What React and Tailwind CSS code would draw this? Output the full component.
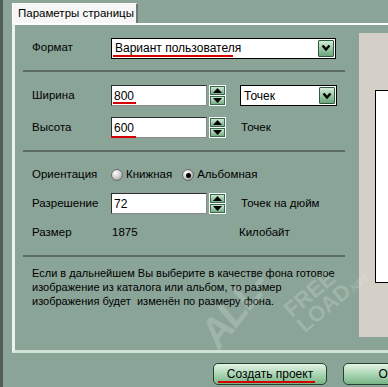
import React from "react";

// Окно "Параметры страницы" — зелёная тема

function Spin() {
  return (
    <div className="ml-[2px] flex h-[21px] w-[17px] flex-col gap-[1px] border border-white bg-white">
      <div className="flex h-[9px] items-center justify-center border border-[#3d6a4b] bg-gradient-to-b from-[#cbe7d1] to-[#78ae88]">
        <svg width="9" height="5" viewBox="0 0 9 5"><polygon points="4.5,0 9,5 0,5" fill="#000" /></svg>
      </div>
      <div className="flex h-[9px] items-center justify-center border border-[#3d6a4b] bg-gradient-to-b from-[#cbe7d1] to-[#78ae88]">
        <svg width="9" height="5" viewBox="0 0 9 5"><polygon points="0,0 9,0 4.5,5" fill="#000" /></svg>
      </div>
    </div>
  );
}

function DropBtn() {
  return (
    <div className="flex h-[17px] w-[16px] items-center justify-center rounded-[1px] border border-[#2e5a3b] bg-gradient-to-b from-[#d3ecd8] via-[#9ccaa7] to-[#6aa47b]">
      <svg width="10" height="8" viewBox="0 0 10 8">
        <path d="M1.5 1.5 L5 5.5 L8.5 1.5" fill="none" stroke="#000" strokeWidth="2.4" />
      </svg>
    </div>
  );
}

function Select({ text, width, underline }) {
  return (
    <div className={`relative flex h-[21px] items-center justify-between border border-black bg-white pl-[3px] pr-[1px] text-[12px] ${width}`}>
      <span>{text}</span>
      <DropBtn />
      {underline && <div className="absolute bottom-[1px] left-[1px] h-[2px] w-[120px] bg-[#d40000]" />}
    </div>
  );
}

function Input({ value, line }) {
  return (
    <div className="relative flex h-[21px] w-[96px] items-center border border-[#8a8a8a] border-l-[#2f2f2f] border-t-[#2f2f2f] bg-white pl-[2px] text-[12px]">
      {value}
      {line}
    </div>
  );
}

function Radio({ checked }) {
  return (
    <div className="flex h-[12px] w-[12px] items-center justify-center rounded-full border border-[#6b6b6b] bg-[radial-gradient(circle_at_35%_30%,#ffffff,#c9c9c9_55%,#7d7d7d)]">
      {checked && <div className="h-[5px] w-[5px] rounded-full bg-black" />}
    </div>
  );
}

function Sep() {
  return <div className="ml-[8px] h-[2px] w-[322px] bg-[#5c6c64]" />;
}

function Label({ children }) {
  return <div className="w-[79px] shrink-0">{children}</div>;
}

function GreenButton({ children, underline, width }) {
  return (
    <button className={`relative flex h-[22px] shrink-0 items-center justify-center rounded-[5px] border border-[#24432e] bg-gradient-to-b from-[#e3f4e6] via-[#acd6b5] to-[#78b487] ${width}`}>
      {children}
      {underline && <div className="absolute bottom-[1px] left-[4px] h-[2px] w-[97px] bg-[#d40000]" />}
    </button>
  );
}

export default function App() {
  return (
    <div className="relative h-[387px] w-[388px] overflow-hidden border-l-[3px] border-l-[#4f5e57] bg-[#8aa497] font-['Liberation_Sans',Arial,sans-serif] text-[11.5px] text-black">
      {/* вкладка */}
      <div className="ml-[9px] mt-[3px] flex h-[20px] w-[126px] items-center whitespace-nowrap border-l border-r-2 border-t border-l-white border-r-[#6a7a72] border-t-white bg-[#f6f6f6] pl-[5px] text-[11.5px]">
        Параметры страницы
      </div>

      {/* рамка */}
      <div className="ml-[9px] flex h-[330px] border-b-[3px] border-l-[3px] border-t-2 border-b-[#cfe2d4] border-l-[#eaf3ec] border-t-white">
        <div className="flex w-[344px] shrink-0 flex-col">
          <div className="ml-[17px] mt-[13px] flex h-[20px] items-center">
            <Label>Формат</Label>
            <Select text="Вариант пользователя" width="w-[225px]" underline />
          </div>
          <div className="mt-[12px]"><Sep /></div>

          <div className="ml-[17px] mt-[13px] flex h-[21px] items-center">
            <Label>Ширина</Label>
            <Input value="800" line={<div className="absolute bottom-[1px] left-[1px] h-[2px] w-[23px] bg-[#d40000]" />} />
            <Spin />
            <div className="ml-[14px]">
              <Select text="Точек" width="w-[97px]" />
            </div>
          </div>

          <div className="ml-[17px] mt-[11px] flex h-[21px] items-center">
            <Label>Высота</Label>
            <Input value="600" line={<div className="absolute -bottom-[1px] -left-[1px] h-[2px] w-[25px] bg-[#d40000]" />} />
            <Spin />
            <div className="ml-[15px]">Точек</div>
          </div>
          <div className="mt-[12px]"><Sep /></div>

          <div className="ml-[17px] mt-[16px] flex h-[14px] items-center">
            <Label>Ориентация</Label>
            <Radio />
            <span className="ml-[3px]">Книжная</span>
            <div className="ml-[10px]"><Radio checked /></div>
            <span className="ml-[3px]">Альбомная</span>
          </div>

          <div className="ml-[17px] mt-[11px] flex h-[21px] items-center">
            <Label>Разрешение</Label>
            <Input value="72" />
            <Spin />
            <div className="ml-[15px]">Точек на дюйм</div>
          </div>

          <div className="ml-[17px] mt-[12px] flex h-[14px] items-center">
            <Label>Размер</Label>
            <div className="w-[128px] pl-[1px]">1875</div>
            <div>Килобайт</div>
          </div>
          <div className="mt-[15px]"><Sep /></div>

          <div className="ml-[17px] mt-[9px] whitespace-nowrap text-[11px] leading-[14px]">
            <div>Если в дальнейшем Вы выберите в качестве фона готовое</div>
            <div>изображение из каталога или альбом, то размер</div>
            <div>изображения будет&nbsp; изменён по размеру фона.</div>
          </div>
        </div>

        {/* превью справа */}
        <div className="mt-[8px] flex h-[304px] flex-1 bg-[#d4d0c8]">
          <div className="ml-[16px] mt-[57px] h-[193px] flex-1 border border-r-0 border-black bg-white" />
        </div>
      </div>

      {/* кнопки */}
      <div className="ml-[210px] mt-[10px] flex gap-[16px] text-[12px]">
        <GreenButton width="w-[114px]" underline>Создать проект</GreenButton>
        <GreenButton width="w-[114px]">Отмена</GreenButton>
      </div>

      {/* водяной знак */}
      <div className="pointer-events-none absolute left-[205px] top-[322px] origin-left -rotate-[52deg] text-[40px] font-black italic leading-none tracking-tighter text-white/20">
        ALL-
      </div>
      <div className="pointer-events-none absolute left-[292px] top-[300px] origin-left -rotate-[40deg] text-[22px] font-black leading-[20px] text-white/20">
        <div>FREE</div>
        <div>LOAD<span className="text-[10px]">.NET</span></div>
      </div>
    </div>
  );
}
